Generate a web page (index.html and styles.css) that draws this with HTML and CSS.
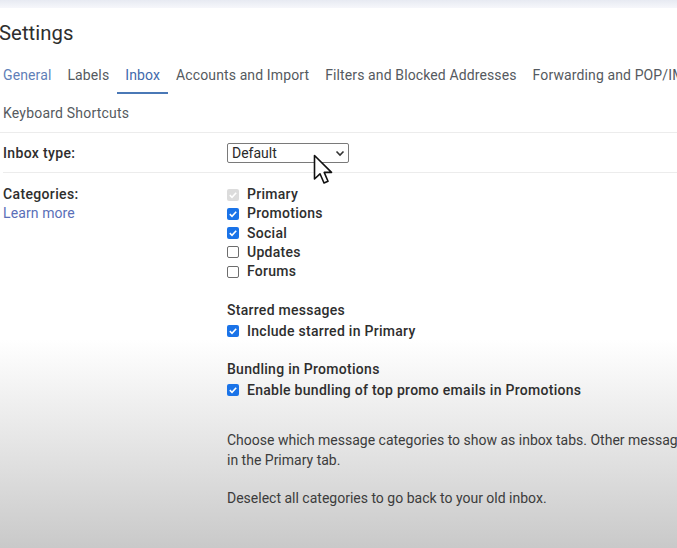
FILE: index.html
```html
<!DOCTYPE html>
<html>
<head>
<meta charset="utf-8">
<link rel="stylesheet" href="styles.css">
</head>
<body>
<div class="topband"></div>
<div class="page">
  <h1 class="title">Settings</h1>
  <div class="tabs">
    <div class="tabrow">
      <span class="tab tab-link">General</span>
      <span class="tab">Labels</span>
      <span class="tab tab-active">Inbox</span>
      <span class="tab">Accounts and Import</span>
      <span class="tab">Filters and Blocked Addresses</span>
      <span class="tab">Forwarding and POP/IMAP</span>
    </div>
    <div class="tabrow">
      <span class="tab">Keyboard Shortcuts</span>
    </div>
  </div>

  <div class="row row-type">
    <div class="label">Inbox type:</div>
    <div class="value">
      <div class="select">
        <span>Default</span>
        <svg class="chev" width="10" height="7" viewBox="0 0 10 7"><path d="M1.5 1.5 L5 5 L8.5 1.5" fill="none" stroke="#333" stroke-width="1.6"/></svg>
      </div>
    </div>
  </div>

  <div class="row row-cat">
    <div class="label">
      <div>Categories:</div>
      <div class="learn">Learn more</div>
    </div>
    <div class="value">
      <div class="check-line"><span class="cb cb-disabled"><svg viewBox="0 0 12 12"><path d="M2.8 6.2 L5 8.3 L9.2 3.8" fill="none" stroke="#fff" stroke-width="1.6"/></svg></span><span class="cl">Primary</span></div>
      <div class="check-line"><span class="cb cb-on"><svg viewBox="0 0 12 12"><path d="M2.8 6.2 L5 8.3 L9.2 3.8" fill="none" stroke="#fff" stroke-width="1.6"/></svg></span><span class="cl">Promotions</span></div>
      <div class="check-line"><span class="cb cb-on"><svg viewBox="0 0 12 12"><path d="M2.8 6.2 L5 8.3 L9.2 3.8" fill="none" stroke="#fff" stroke-width="1.6"/></svg></span><span class="cl">Social</span></div>
      <div class="check-line"><span class="cb cb-off"></span><span class="cl">Updates</span></div>
      <div class="check-line"><span class="cb cb-off"></span><span class="cl">Forums</span></div>

      <div class="subhead">Starred messages</div>
      <div class="check-line"><span class="cb cb-on"><svg viewBox="0 0 12 12"><path d="M2.8 6.2 L5 8.3 L9.2 3.8" fill="none" stroke="#fff" stroke-width="1.6"/></svg></span><span class="cl">Include starred in Primary</span></div>

      <div class="subhead subhead2">Bundling in Promotions</div>
      <div class="check-line"><span class="cb cb-on"><svg viewBox="0 0 12 12"><path d="M2.8 6.2 L5 8.3 L9.2 3.8" fill="none" stroke="#fff" stroke-width="1.6"/></svg></span><span class="cl">Enable bundling of top promo emails in Promotions</span></div>

      <p class="desc">Choose which message categories to show as inbox tabs. Other messages will appear<br>in the Primary tab.</p>
      <p class="desc desc2">Deselect all categories to go back to your old inbox.</p>
    </div>
  </div>
</div>
<svg class="cursor" width="22" height="32" viewBox="0 0 22 32">
  <path d="M1.5 1.5 L1.5 25 L7 19.8 L11 29 L15 27.3 L11.2 18.4 L18.5 18.4 Z" fill="#fff" stroke="#111" stroke-width="1.6" stroke-linejoin="round"/>
</svg>
</body>
</html>
```

FILE: styles.css
```css
html, body {
  margin: 0;
  padding: 0;
}
body {
  width: 677px;
  height: 548px;
  overflow: hidden;
  position: relative;
  font-family: Roboto, "Liberation Sans", sans-serif;
  color: #2a2a2a;
  background: linear-gradient(to bottom, #ffffff 0px, #ffffff 340px, #e6e6e6 440px, #c9c9c9 548px);
}
.topband {
  height: 8px;
  background: linear-gradient(to bottom, #e7eaf2, #f6f7fb);
}
.page {
  padding-left: 3px;
  width: 900px;
}
.title {
  margin: 11px 0 0 -4px;
  font-size: 20.3px;
  line-height: 28px;
  font-weight: 400;
  color: #2e2e2e;
  letter-spacing: 0.05px;
}
.tabs {
  margin-top: 18px;
  margin-left: -8px;
  border-bottom: 1px solid #ececec;
}
.tabrow {
  display: flex;
  white-space: nowrap;
}
.tab {
  font-size: 14px;
  line-height: 20px;
  letter-spacing: 0.12px;
  padding: 0 8px 7px;
  border-bottom: 2px solid transparent;
  color: #555a60;
}
.tabrow + .tabrow .tab {
  padding-top: 9px;
  padding-bottom: 9px;
  border-bottom: 0;
  letter-spacing: 0.2px;
}
.tab-link {
  color: #5f7fb8;
}
.tab-active {
  color: #3f6aac;
  border-bottom-color: #4a78b6;
}
.row {
  display: flex;
  font-size: 14px;
}
.label {
  width: 224px;
  flex: none;
  font-weight: 500;
  letter-spacing: 0.35px;
  color: #2e2e2e;
}
.row-type {
  height: 39px;
  align-items: center;
  border-bottom: 1px solid #ececec;
}
.select {
  width: 112px;
  height: 18px;
  border: 1px solid #7a7a7a;
  border-radius: 2px;
  background: #fff;
  display: flex;
  align-items: center;
  justify-content: space-between;
  padding: 0 4px;
  box-sizing: content-box;
  font-size: 14px;
  color: #2a2a2a;
  margin-top: 1px;
}
.chev {
  margin-right: -1px;
}
.row-cat {
  padding-top: 12px;
  line-height: 19.25px;
}
.learn {
  font-weight: 400;
  letter-spacing: 0.1px;
  color: #5a6fb8;
}
.value {
  color: #2a2a2a;
}
.check-line {
  display: flex;
  align-items: center;
  height: 19.25px;
  white-space: nowrap;
}
.cl {
  font-weight: 500;
  letter-spacing: 0.28px;
  color: #2e2e2e;
}
.cb {
  width: 12px;
  height: 12px;
  box-sizing: border-box;
  border-radius: 2px;
  margin-right: 8px;
  flex: none;
  display: flex;
}
.cb svg {
  width: 12px;
  height: 12px;
}
.cb-on {
  background: #1a73e8;
}
.cb-disabled {
  background: #dcdcdc;
}
.cb-off {
  border: 1px solid #6d6d6d;
  background: #fff;
}
.subhead {
  margin-top: 20px;
  font-weight: 500;
  letter-spacing: 0.28px;
  color: #2e2e2e;
  line-height: 19px;
}
.subhead2 {
  margin-top: 18px;
}
.subhead + .check-line {
  height: 22px;
}
.desc {
  margin: 29px 0 0;
  line-height: 20px;
  color: #3c3c3c;
  white-space: nowrap;
}
.desc2 {
  margin-top: 18px;
}
.cursor {
  position: absolute;
  left: 313px;
  top: 154px;
}
```
